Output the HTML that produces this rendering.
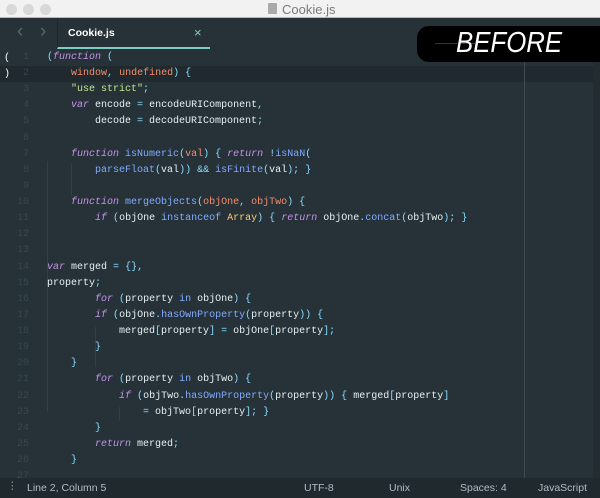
<!DOCTYPE html>
<html><head><style>
*{margin:0;padding:0;box-sizing:border-box}
body{width:600px;height:498px;overflow:hidden;background:#263238;font-family:"Liberation Mono",monospace;position:relative}
#title{position:absolute;left:0;top:0;width:600px;height:18px;background:#f2f2f2;border-bottom:1px solid #b8b8b8}
.dot{position:absolute;top:4px;width:11px;height:11px;border-radius:50%;background:#d8d8d8}
#title .t{position:absolute;left:282px;top:2px;font:13px "Liberation Sans",sans-serif;color:#7a7a7a}
#tabs{position:absolute;top:18px;left:0;width:600px;height:31px;background:#263238}
#tab{position:absolute;left:57px;top:0;width:153px;height:31px;border-left:1px solid #1e282d;border-bottom:2px solid #80cbc4}
#tab .n{position:absolute;left:10px;top:9px;font:bold 10.5px "Liberation Sans",sans-serif;color:#fff}
#tab .x{position:absolute;left:136px;top:7px;font:13px "Liberation Sans",sans-serif;color:#80cbc4}
.arr{position:absolute;top:3px;font:19px "Liberation Sans",sans-serif;color:#4e6a78}
#hl{position:absolute;left:0;top:66px;width:593px;height:16px;background:#1f292e}
.ln{position:absolute;left:0;width:29px;text-align:right;font-size:10px;color:#37474f;height:16px;line-height:16px}
.c{position:absolute;left:47px;font-size:10px;color:#e6f0f2;white-space:pre;height:16px;line-height:16px}
.k{color:#c792ea;font-style:italic}.p{color:#f78c6c}.s{color:#c3e88d}.f{color:#82aaff}.u{color:#89ddff}.y{color:#ffcb6b}
.g{position:absolute;width:1px;background:#323f46}
#ruler{position:absolute;left:524px;top:49px;width:1px;height:429px;background:#3d4c54}
#sb{position:absolute;left:593px;top:49px;width:7px;height:429px;background:#222c31}
#status{position:absolute;left:0;top:478px;width:600px;height:20px;background:#1f292e;font:10.5px "Liberation Sans",sans-serif;color:#b0bec5}
#status span{position:absolute;top:4px}
#badge{position:absolute;left:417px;top:26px;width:200px;height:36px;background:#000;border-radius:12px}
#badge .l{position:absolute;left:18px;top:17px;width:40px;height:1px;background:#333}
#badge .t{position:absolute;left:39px;top:1px;font:italic 29px "Liberation Sans",sans-serif;color:#fff;transform:scaleX(0.89);transform-origin:0 0}
</style></head><body>
<div id="title"><div class="dot" style="left:6px"></div><div class="dot" style="left:23px"></div><div class="dot" style="left:40px"></div>
<div style="position:absolute;left:268px;top:3px;width:9px;height:11px;background:#aaa;border-radius:1px"></div><div class="t">Cookie.js</div></div>
<div id="tabs"><div class="arr" style="left:17px">&#x2039;</div><div class="arr" style="left:40px">&#x203A;</div>
<div id="tab"><div class="n">Cookie.js</div><div class="x">×</div></div></div>
<div id="hl"></div>
<div id="ruler"></div><div id="sb"></div>
<div class="g" style="left:47px;top:161px;height:250px"></div>
<div class="g" style="left:71px;top:163px;height:32px"></div>
<div class="g" style="left:95px;top:327px;height:40px"></div>
<div class="g" style="left:119px;top:407px;height:14px"></div>
<div style="position:absolute;left:4px;top:51px;font-size:10px;color:#fff;line-height:16px">(<br>)</div>
<div id="code"></div>
<div id="badge"><div class="l"></div><div class="t">BEFORE</div></div>
<div id="status"><span style="left:7px;top:2px;color:#8a9aa2">&#8942;</span><span style="left:27px">Line 2, Column 5</span><span style="left:304px">UTF-8</span><span style="left:389px">Unix</span><span style="left:460px">Spaces: 4</span><span style="left:538px">JavaScript</span></div>
<script>
var L=[
'<span class="u">(</span><span class="k">function</span> <span class="u">(</span>',
'    <span class="p">window</span><span class="u">,</span> <span class="p">undefined</span><span class="u">)</span> <span class="u">{</span>',
'    <span class="s">"use strict"</span><span class="u">;</span>',
'    <span class="k">var</span> encode <span class="u">=</span> encodeURIComponent<span class="u">,</span>',
'        decode <span class="u">=</span> decodeURIComponent<span class="u">;</span>',
'',
'    <span class="k">function</span> <span class="f">isNumeric</span><span class="u">(</span><span class="p">val</span><span class="u">)</span> <span class="u">{</span> <span class="k">return</span> <span class="u">!</span><span class="f">isNaN</span><span class="u">(</span>',
'        <span class="f">parseFloat</span><span class="u">(</span>val<span class="u">))</span> <span class="u">&amp;&amp;</span> <span class="f">isFinite</span><span class="u">(</span>val<span class="u">);</span> <span class="u">}</span>',
'',
'    <span class="k">function</span> <span class="f">mergeObjects</span><span class="u">(</span><span class="p">objOne</span><span class="u">,</span> <span class="p">objTwo</span><span class="u">)</span> <span class="u">{</span>',
'        <span class="k">if</span> <span class="u">(</span>objOne <span class="f">instanceof</span> <span class="y">Array</span><span class="u">)</span> <span class="u">{</span> <span class="k">return</span> objOne<span class="u">.</span><span class="f">concat</span><span class="u">(</span>objTwo<span class="u">);</span> <span class="u">}</span>',
'','',
'<span class="k">var</span> merged <span class="u">=</span> <span class="u">{},</span>',
'property<span class="u">;</span>',
'        <span class="k">for</span> <span class="u">(</span>property <span class="f">in</span> objOne<span class="u">)</span> <span class="u">{</span>',
'        <span class="k">if</span> <span class="u">(</span>objOne<span class="u">.</span><span class="f">hasOwnProperty</span><span class="u">(</span>property<span class="u">))</span> <span class="u">{</span>',
'            merged<span class="u">[</span>property<span class="u">]</span> <span class="u">=</span> objOne<span class="u">[</span>property<span class="u">];</span>',
'        <span class="u">}</span>',
'    <span class="u">}</span>',
'        <span class="k">for</span> <span class="u">(</span>property <span class="f">in</span> objTwo<span class="u">)</span> <span class="u">{</span>',
'            <span class="k">if</span> <span class="u">(</span>objTwo<span class="u">.</span><span class="f">hasOwnProperty</span><span class="u">(</span>property<span class="u">))</span> <span class="u">{</span> merged<span class="u">[</span>property<span class="u">]</span>',
'                <span class="u">=</span> objTwo<span class="u">[</span>property<span class="u">];</span> <span class="u">}</span>',
'        <span class="u">}</span>',
'        <span class="k">return</span> merged<span class="u">;</span>',
'    <span class="u">}</span>',''];
var h='';
for(var i=0;i<L.length;i++){var t=50+i*16.12;
h+='<div class="ln" style="top:'+t+'px">'+(i+1)+'</div><div class="c" style="top:'+t+'px">'+L[i]+'</div>';}
document.getElementById('code').innerHTML=h;
</script>
</body></html>
